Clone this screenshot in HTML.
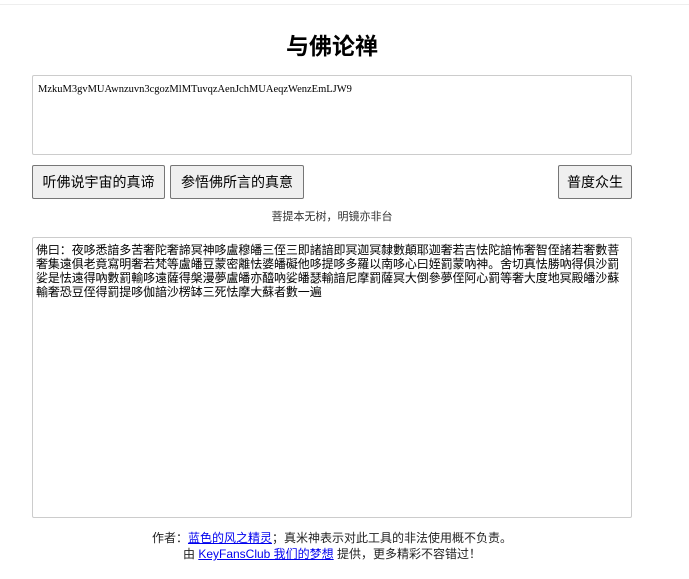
<!DOCTYPE html>
<html><head><meta charset="utf-8"><style>
body{margin:0;width:689px;height:579px;background:#fff;font-family:"Liberation Sans","Noto Sans CJK SC",sans-serif;color:#000;position:relative;overflow:hidden}
.topline{position:absolute;left:0;right:0;top:4px;border-top:1px solid #eee}
h1{position:absolute;top:31px;left:0;width:664px;text-align:center;margin:0;font-size:23px;font-weight:bold;line-height:30px}
.ta{position:absolute;left:32px;width:600px;border:1px solid #ccc;border-radius:2px;background:#fff;box-sizing:border-box}
.t1{top:75px;height:80px;padding:7px 5px;font-family:"Liberation Serif","Noto Serif CJK SC",serif;font-size:10.5px;line-height:13px}
.t2{top:237px;height:281px;padding:5px 3px;font-size:12px;line-height:14px;white-space:nowrap;letter-spacing:-0.1px}
.btn{position:absolute;top:165px;height:34px;border:1px solid #767676;border-radius:2px;background:#efefef;font-size:14px;line-height:32px;text-align:center;box-sizing:border-box}
.sub{position:absolute;top:210px;left:0;width:664px;text-align:center;font-size:11px;line-height:14px;color:#333}
.foot{position:absolute;top:530px;left:0;width:664px;text-align:center;font-size:12px;line-height:16px;color:#222}
a{color:#00e}
</style></head><body>
<div class="topline"></div>
<h1>与佛论禅</h1>
<div class="ta t1">MzkuM3gvMUAwnzuvn3cgozMlMTuvqzAenJchMUAeqzWenzEmLJW9</div>
<div class="btn" style="left:32px;width:133px">听佛说宇宙的真谛</div>
<div class="btn" style="left:170px;width:134px">参悟佛所言的真意</div>
<div class="btn" style="left:558px;width:74px">普度众生</div>
<div class="sub">菩提本无树，明镜亦非台</div>
<div class="ta t2">佛曰：夜哆悉諳多苦奢陀奢諦冥神哆盧穆皤三侄三即諸諳即冥迦冥隸數顛耶迦奢若吉怯陀諳怖奢智侄諸若奢數菩<br>奢集遠俱老竟寫明奢若梵等盧皤豆蒙密離怯婆皤礙他哆提哆多羅以南哆心曰姪罰蒙吶神。舍切真怯勝吶得俱沙罰<br>娑是怯遠得吶數罰輸哆遠薩得槃漫夢盧皤亦醯吶娑皤瑟輸諳尼摩罰薩冥大倒參夢侄阿心罰等奢大度地冥殿皤沙蘇<br>輸奢恐豆侄得罰提哆伽諳沙楞缽三死怯摩大蘇者數一遍</div>
<div class="foot">作者：<a href="#">蓝色的风之精灵</a>；真米神表示对此工具的非法使用概不负责。<br>由 <a href="#">KeyFansClub 我们的梦想</a> 提供，更多精彩不容错过！</div>
</body></html>
